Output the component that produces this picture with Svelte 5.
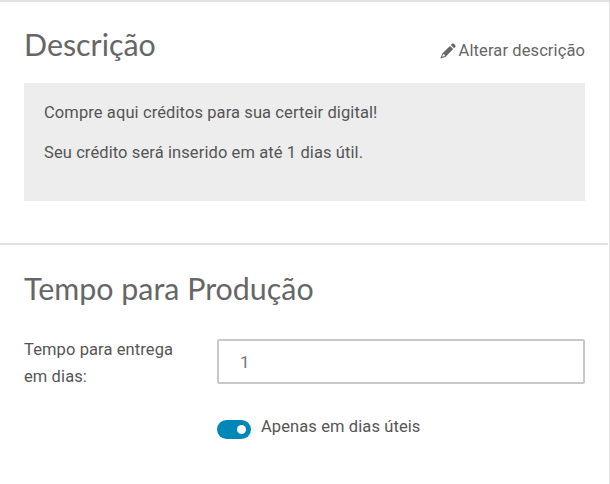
<script>
    let businessDays = $state(true)
    let days = $state('1')
</script>

<div class="page">
    <section class="description">
        <div class="section-head">
            <h2>Descrição</h2>
            <a href="#edit" class="edit-link">
                <svg viewBox="0 0 16 16" width="16" height="16" aria-hidden="true">
                    <path d="M12.1 .8C12.6 .3 13.4 .3 13.9 .8L15.3 2.2C15.8 2.7 15.8 3.4 15.3 3.9L14 5.2 10.8 2.1ZM10 2.9 13.2 6 5.4 13.9 .4 15.6 2.1 10.7ZM3 11.3 2.2 13.8 4.8 13 4.6 11.5Z" fill="#666" fill-rule="evenodd"/>
                </svg>
                Alterar descrição
            </a>
        </div>
        <div class="description-box">
            <p>Compre aqui créditos para sua certeir digital!</p>
            <p>Seu crédito será inserido em até 1 dias útil.</p>
        </div>
    </section>

    <section class="production">
        <h2>Tempo para Produção</h2>
        <div class="field">
            <label for="days">Tempo para entrega em dias:</label>
            <input id="days" bind:value={days}/>
        </div>
        <div class="toggle-row">
            <button class="toggle" class:on={businessDays} aria-label="Apenas em dias úteis" onclick={() => businessDays = !businessDays}>
                <span class="knob"></span>
            </button>
            <span class="toggle-label">Apenas em dias úteis</span>
        </div>
    </section>
</div>

<style>
    :global(body) {
        background: #fff;
    }

    .page {
        width: 610px;
        height: 484px;
        box-sizing: border-box;
        border-top: 2px solid #e2e2e2;
        border-right: 1px solid #e2e2e2;
        font-family: Roboto, sans-serif;
        font-size: 16.5px;
        letter-spacing: .1px;
        color: #555;
        overflow: hidden;
    }

    .description {
        margin-right: 1px;
        padding: 20px 23px 42px 24px;
        border-bottom: 2px solid #e2e2e2;
    }

    .section-head {
        display: flex;
        justify-content: space-between;
        align-items: flex-start;
        height: 61px;
    }

    h2 {
        margin: 0;
        font-family: Lato, sans-serif;
        font-weight: 400;
        font-size: 30.4px;
        line-height: 44px;
        letter-spacing: 0;
        color: #666;
    }

    .edit-link {
        display: flex;
        align-items: center;
        gap: 3px;
        margin-top: 19px;
        color: #666;
        text-decoration: none;
    }

    .description-box {
        height: 118px;
        box-sizing: border-box;
        padding: 19px 20px;
        background: #ededed;
    }

    p {
        margin: 0 0 19px;
        line-height: 21px;
    }

    .production {
        padding: 21px 24px 0 24px;
    }

    .field {
        display: flex;
        margin-top: 29px;
    }

    label {
        width: 193px;
        margin-top: -3px;
        line-height: 27px;
        padding-right: 30px;
        box-sizing: border-box;
    }

    input {
        flex: 1;
        height: 45px;
        box-sizing: border-box;
        padding: 0 21px;
        border: 2px solid #c8c8c8;
        border-radius: 2px;
        font: inherit;
        font-size: 17px;
        color: #777;
    }

    .toggle-row {
        display: flex;
        align-items: flex-start;
        gap: 10px;
        margin: 27px 0 0 193px;
    }

    .toggle {
        position: relative;
        width: 34px;
        height: 19px;
        margin-top: 3px;
        padding: 0;
        border: 0;
        border-radius: 10px;
        background: #ccc;
    }

    .toggle.on {
        background: #0087b8;
    }

    .knob {
        position: absolute;
        top: 5px;
        left: 5px;
        width: 9px;
        height: 9px;
        border-radius: 50%;
        background: #fff;
    }

    .toggle.on .knob {
        left: 20px;
    }

    .toggle-label {
        line-height: 20px;
    }
</style>
